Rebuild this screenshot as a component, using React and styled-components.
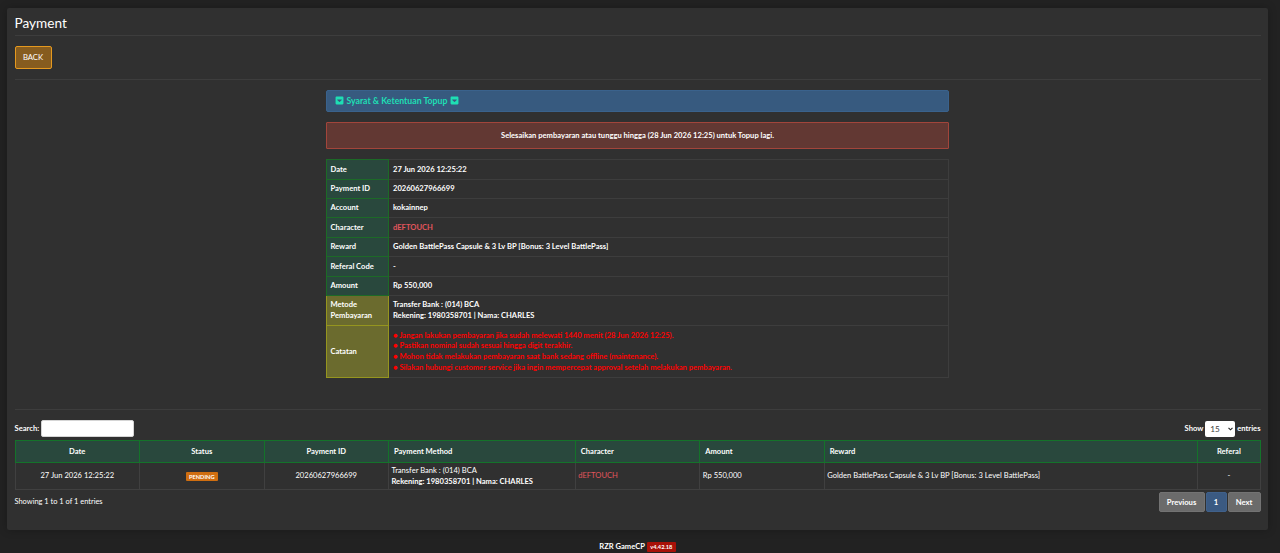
import React from 'react';
import styled, { createGlobalStyle } from 'styled-components';
import { FaCaretSquareDown } from 'react-icons/fa';

const GlobalStyle = createGlobalStyle`
    * {
        box-sizing: border-box;
    }

    body {
        margin: 0;
        background: #222222;
        color: #ffffff;
        font-family: 'Lato', sans-serif;
        font-size: 7.58px;
        line-height: 10.7px;
        overflow: hidden;
    }
`;

const Panel = styled.main`
    height: 522px;
    margin: 8px 12px 0 7px;
    padding: 0 7.5px;
    background: #303030;
    border-radius: 2px;
    box-shadow: 0 0 8px rgba(0, 0, 0, 0.25);
`;

const Title = styled.h1`
    height: 28px;
    margin: 0;
    padding-top: 7px;
    border-bottom: 1px solid #3d3d3d;
    font-size: 13.6px;
    font-weight: 400;
    line-height: 17px;
`;

const Toolbar = styled.div`
    height: 44px;
    padding-top: 10px;
    border-bottom: 1px solid #3d3d3d;
`;

const BackButton = styled.button`
    display: block;
    width: 37px;
    height: 23px;
    padding: 0 0 1px;
    background: #865c1f;
    border: 1px solid #e5991f;
    border-radius: 2px;
    color: #ffffff;
    font-family: inherit;
    font-size: 7.7px;
`;

const Invoice = styled.section`
    display: flex;
    flex-direction: column;
    width: 623px;
    height: 329px;
    margin: 0 0 0 311.5px;
    padding-top: 10px;
`;

const TermsBar = styled.div`
    display: flex;
    align-items: center;
    gap: 2.5px;
    height: 22px;
    padding: 0 0 0 8px;
    background: #375a7f;
    border: 1px solid #3a628c;
    border-radius: 2px;
    color: #1edfb4;
    font-size: 8.7px;
    font-weight: 700;

    svg {
        width: 9px;
        height: 9px;
        margin-bottom: 1px;
    }
`;

const Alert = styled.div`
    height: 27px;
    margin: 10px 0;
    background: #623833;
    border: 1px solid #a2453b;
    border-radius: 1px;
    font-weight: 700;
    line-height: 25px;
    text-align: center;
`;

const DetailTable = styled.table`
    width: 100%;
    table-layout: fixed;
    border-collapse: collapse;
    font-weight: 700;
`;

const DetailRow = styled.tr`
    height: ${({ $height }) => $height}px;
`;

const DetailLabel = styled.th`
    width: 62px;
    padding: 1px 0 0 3.5px;
    background: ${({ $note }) => ($note ? '#6b6b2e' : '#29483d')};
    border: 1px solid ${({ $note }) => ($note ? '#95951f' : '#1c6a27')};
    text-align: left;
`;

const DetailValue = styled.td`
    padding: 1px 4px 0;
    border: 1px solid #3d3d3d;
    color: ${({ $color }) => $color || '#ffffff'};
`;

const History = styled.section`
    border-top: 1px solid #3d3d3d;
    padding-top: 10px;
`;

const Controls = styled.div`
    display: flex;
    justify-content: space-between;
    height: 20px;
`;

const ControlLabel = styled.label`
    display: flex;
    align-items: center;
    gap: 2px;
    height: 17px;
    font-weight: 700;
    line-height: 12px;
`;

const SearchInput = styled.input`
    width: 93px;
    height: 17px;
    background: #ffffff;
    border: 1px solid #d5d5d5;
    border-radius: 2px;
`;

const LengthBox = styled.span`
    display: flex;
    align-items: center;
    justify-content: space-between;
    width: 30px;
    height: 16px;
    padding: 1px 2px 0 5px;
    background: #ffffff;
    border-radius: 2px;
    color: #444444;
    font-size: 8.2px;
    font-weight: 400;
`;

const HistoryTable = styled.table`
    width: 100%;
    table-layout: fixed;
    border-collapse: collapse;
`;

const HeadCell = styled.th`
    width: ${({ $width }) => $width};
    height: 22px;
    padding: 1px 5px 0;
    background: #29483d;
    border: 1px solid #14732a;
    text-align: ${({ $align }) => $align || 'left'};
`;

const Cell = styled.td`
    height: 27px;
    padding: 1px 2.5px 0;
    border: 1px solid #404040;
    border-top: 0;
    color: ${({ $color }) => $color || '#ffffff'};
    text-align: ${({ $align }) => $align || 'left'};
`;

const Badge = styled.span`
    display: inline-block;
    height: ${({ $height }) => $height || 9}px;
    padding: 0 3.3px;
    background: ${({ $color }) => $color};
    border-radius: 1px;
    color: #ffffff;
    font-size: 5.7px;
    font-weight: 700;
    line-height: ${({ $height }) => $height || 9}px;
    vertical-align: middle;
`;

const TableFooter = styled.div`
    display: flex;
    justify-content: space-between;
    padding-top: 2px;
`;

const Info = styled.div`
    padding-top: 5px;
    font-size: 7.45px;
`;

const Pagination = styled.div`
    display: flex;
    gap: 1px;
`;

const PageButton = styled.button`
    width: ${({ $width }) => $width}px;
    height: 20px;
    padding: 0;
    background: ${({ $active }) => ($active ? '#3b5a82' : '#6b6b6b')};
    border: 1px solid ${({ $active }) => ($active ? '#40618b' : '#737373')};
    border-radius: 2px;
    color: #ffffff;
    font-family: inherit;
    font-size: 7.7px;
    font-weight: 700;
`;

const Footer = styled.footer`
    display: flex;
    align-items: center;
    justify-content: center;
    gap: 2px;
    height: 10px;
    margin: 12px 5px 0 0;
    font-weight: 700;
`;

const details = [
    { label: 'Date', value: '27 Jun 2026 12:25:22', height: 20 },
    { label: 'Payment ID', value: '20260627966699', height: 19 },
    { label: 'Account', value: 'kokainnep', height: 19 },
    { label: 'Character', value: 'dEFTOUCH', height: 20, color: '#e2555c' },
    { label: 'Reward', value: 'Golden BattlePass Capsule & 3 Lv BP [Bonus: 3 Level BattlePass]', height: 19 },
    { label: 'Referal Code', value: '-', height: 20 },
    { label: 'Amount', value: 'Rp 550,000', height: 19 },
];

const notes = [
    'Jangan lakukan pembayaran jika sudah melewati 1440 menit (28 Jun 2026 12:25).',
    'Pastikan nominal sudah sesuai hingga digit terakhir.',
    'Mohon tidak melakukan pembayaran saat bank sedang offline (maintenance).',
    'Silakan hubungi customer service jika ingin mempercepat approval setelah melakukan pembayaran.',
];

const columns = [
    { name: 'Date', width: '10%', align: 'center' },
    { name: 'Status', width: '10%', align: 'center' },
    { name: 'Payment ID', width: '10%', align: 'center' },
    { name: 'Payment Method', width: '15%' },
    { name: 'Character', width: '10%' },
    { name: 'Amount', width: '10%' },
    { name: 'Reward', width: '30%' },
    { name: 'Referal', width: '5%', align: 'center' },
];

const InvoiceDetails = () => (
    <DetailTable>
        <tbody>
            {details.map(item => (
                <DetailRow key={item.label} $height={item.height}>
                    <DetailLabel>{item.label}</DetailLabel>
                    <DetailValue $color={item.color}>{item.value}</DetailValue>
                </DetailRow>
            ))}
            <DetailRow $height={30}>
                <DetailLabel $note>Metode Pembayaran</DetailLabel>
                <DetailValue>
                    Transfer Bank : (014) BCA<br/>
                    Rekening: 1980358701 | Nama: CHARLES
                </DetailValue>
            </DetailRow>
            <DetailRow $height={52}>
                <DetailLabel $note>Catatan</DetailLabel>
                <DetailValue $color="#ff0000">
                    {notes.map(note => <div key={note}>● {note}</div>)}
                </DetailValue>
            </DetailRow>
        </tbody>
    </DetailTable>
);

const PaymentHistory = () => (
    <HistoryTable>
        <thead>
            <tr>
                {columns.map(({ name, width, align }) => (
                    <HeadCell key={name} $width={width} $align={align}>{name}</HeadCell>
                ))}
            </tr>
        </thead>
        <tbody>
            <tr>
                <Cell $align="center">27 Jun 2026 12:25:22</Cell>
                <Cell $align="center"><Badge $color="#cf6e10">PENDING</Badge></Cell>
                <Cell $align="center">20260627966699</Cell>
                <Cell>
                    Transfer Bank : (014) BCA<br/>
                    <b>Rekening: 1980358701 | Nama: CHARLES</b>
                </Cell>
                <Cell $color="#e2555c">dEFTOUCH</Cell>
                <Cell>Rp 550,000</Cell>
                <Cell>Golden BattlePass Capsule &amp; 3 Lv BP [Bonus: 3 Level BattlePass]</Cell>
                <Cell $align="center">-</Cell>
            </tr>
        </tbody>
    </HistoryTable>
);

const App = () => (
    <>
        <GlobalStyle/>
        <Panel>
            <Title>Payment</Title>
            <Toolbar>
                <BackButton>BACK</BackButton>
            </Toolbar>
            <Invoice>
                <TermsBar>
                    <FaCaretSquareDown/>
                    Syarat &amp; Ketentuan Topup
                    <FaCaretSquareDown/>
                </TermsBar>
                <Alert>Selesaikan pembayaran atau tunggu hingga (28 Jun 2026 12:25) untuk Topup lagi.</Alert>
                <InvoiceDetails/>
            </Invoice>
            <History>
                <Controls>
                    <ControlLabel>
                        <span>Search:</span>
                        <SearchInput/>
                    </ControlLabel>
                    <ControlLabel>
                        <span>Show</span>
                        <LengthBox>
                            15
                            <svg width="5" height="4" viewBox="0 0 5 4" fill="none" stroke="#222222" strokeWidth="1.1">
                                <path d="M.5 .8l2 2 2-2"/>
                            </svg>
                        </LengthBox>
                        <span>entries</span>
                    </ControlLabel>
                </Controls>
                <PaymentHistory/>
                <TableFooter>
                    <Info>Showing 1 to 1 of 1 entries</Info>
                    <Pagination>
                        <PageButton $width={46}>Previous</PageButton>
                        <PageButton $width={21} $active>1</PageButton>
                        <PageButton $width={33}>Next</PageButton>
                    </Pagination>
                </TableFooter>
            </History>
        </Panel>
        <Footer>
            RZR GameCP
            <Badge $color="#a81108" $height={10}>v4.42.18</Badge>
        </Footer>
    </>
);

export default App;
